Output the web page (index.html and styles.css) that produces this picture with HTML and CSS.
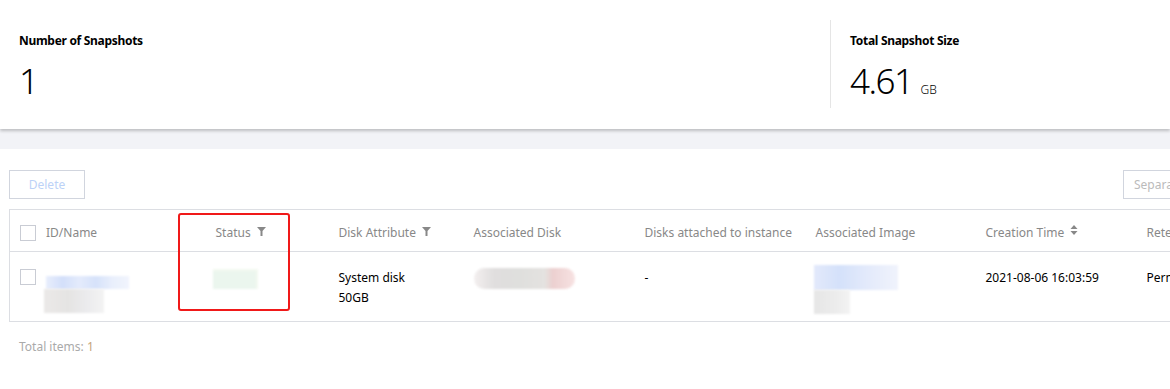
FILE: index.html
```html
<!DOCTYPE html>
<html>
<head>
    <title>Snapshots</title>
    <link rel="stylesheet" href="styles.css">
</head>
<body>
    <div class="summary">
        <div class="stat stat-count">
            <div class="stat-label">Number of Snapshots</div>
            <div class="stat-value">1</div>
        </div>
        <div class="stat stat-size">
            <div class="stat-label">Total Snapshot Size</div>
            <div class="stat-value">4.61<span class="unit">GB</span></div>
        </div>
    </div>
    <div class="band"></div>

    <div class="main">
        <div class="toolbar">
            <button class="btn-delete">Delete</button>
            <div class="search">Separate keywords with "|"</div>
        </div>

        <div class="table-box">
            <table class="grid">
                <colgroup>
                    <col class="c-id">
                    <col class="c-status">
                    <col class="c-attr">
                    <col class="c-disk">
                    <col class="c-attached">
                    <col class="c-image">
                    <col class="c-time">
                    <col class="c-ret">
                </colgroup>
                <thead>
                    <tr>
                        <th><span class="check"></span>ID/Name</th>
                        <th>Status <svg class="ico" width="9" height="9" viewBox="0 0 9 9"><path d="M0 0H9L5.5 4V9H3.5V4Z" fill="#888"/></svg></th>
                        <th>Disk Attribute <svg class="ico" width="9" height="9" viewBox="0 0 9 9"><path d="M0 0H9L5.5 4V9H3.5V4Z" fill="#888"/></svg></th>
                        <th>Associated Disk</th>
                        <th>Disks attached to instance</th>
                        <th>Associated Image</th>
                        <th>Creation Time <svg class="ico sort" width="8" height="10" viewBox="0 0 8 10"><path d="M4 0L7.5 4H0.5Z M4 10L7.5 6H0.5Z" fill="#888"/></svg></th>
                        <th>Retention Period</th>
                    </tr>
                </thead>
                <tbody>
                    <tr>
                        <td>
                            <div class="id-cell">
                                <span class="check"></span>
                                <div class="blur-stack">
                                    <div class="blur blur-blue wide"></div>
                                    <div class="blur blur-gray short"></div>
                                </div>
                            </div>
                        </td>
                        <td><div class="blur blur-green"></div></td>
                        <td><div>System disk</div><div>50GB</div></td>
                        <td><div class="blur blur-disk"></div></td>
                        <td>-</td>
                        <td>
                            <div class="blur-stack">
                                <div class="blur blur-blue image"></div>
                                <div class="blur blur-gray tiny"></div>
                            </div>
                        </td>
                        <td>2021-08-06 16:03:59</td>
                        <td>Permanent</td>
                    </tr>
                </tbody>
            </table>
            <div class="mark"></div>
        </div>

        <div class="total">Total items: <span class="total-num">1</span></div>
    </div>
</body>
</html>
```

FILE: styles.css
```css
body {
    margin: 0;
    font-family: "Noto Sans", "Liberation Sans", sans-serif;
    font-size: 12px;
    color: #000;
    background-color: #fff;
    overflow: hidden;
}

.summary {
    height: 129px;
    display: flex;
    background-color: #fff;
    box-shadow: 0 2px 3px rgba(0, 0, 0, 0.22);
    position: relative;
    z-index: 1;
}

.stat {
    padding: 33px 19px 0;
}

.stat-count {
    width: 792px;
    margin: 20px 0 21px;
    padding-top: 13px;
    border-right: 1px solid #e5e5e5;
}

.stat-label {
    font-weight: bold;
    line-height: 16px;
    letter-spacing: -0.3px;
    color: #000;
}

.stat-value {
    margin-top: 10px;
    font-size: 35px;
    font-weight: 300;
    line-height: 44px;
    letter-spacing: -1.5px;
}

.stat-value .unit {
    font-size: 12px;
    letter-spacing: 0;
    margin-left: 8px;
}

.band {
    height: 20px;
    background-color: #f2f3f7;
}

.main {
    padding: 21px 0 0 9px;
}

.toolbar {
    display: flex;
    justify-content: space-between;
    width: 1300px;
}

.btn-delete {
    width: 76px;
    height: 29px;
    border: 1px solid #d1d5de;
    background-color: #fff;
    color: #bcd2f7;
    font-family: inherit;
    font-size: 12px;
    padding: 0;
}

.search {
    width: 174px;
    height: 27px;
    border: 1px solid #d1d5de;
    line-height: 27px;
    padding-left: 10px;
    color: #bbb;
    white-space: nowrap;
    overflow: hidden;
}

.table-box {
    position: relative;
    margin-top: 10px;
    width: 1300px;
}

.grid {
    border-collapse: collapse;
    table-layout: fixed;
    width: 1300px;
    border: 1px solid #dcdee3;
}

.c-id { width: 198px; }
.c-status { width: 121px; }
.c-attr { width: 135px; }
.c-disk { width: 171px; }
.c-attached { width: 171px; }
.c-image { width: 170px; }
.c-time { width: 161px; }

.grid th {
    height: 42px;
    padding: 4px 10px 0;
    box-sizing: border-box;
    text-align: left;
    font-weight: normal;
    color: #888;
    white-space: nowrap;
    border-bottom: 1px solid #dcdee3;
}

.grid th:nth-child(2) {
    padding-left: 8px;
}

.grid td {
    height: 70px;
    padding: 16px 10px 0;
    vertical-align: top;
    line-height: 20px;
    box-sizing: border-box;
    white-space: nowrap;
}

.grid td:nth-child(2) {
    padding-left: 5px;
}

.check {
    display: inline-block;
    width: 14px;
    height: 14px;
    border: 1px solid #c9ccd4;
    vertical-align: -4px;
    margin-right: 10px;
    background-color: #fff;
}

.ico {
    margin-left: 3px;
    vertical-align: 1px;
}

.ico.sort {
    vertical-align: 2px;
}

.id-cell {
    display: flex;
    align-items: flex-start;
}

.id-cell .check {
    margin-top: 1px;
}

.blur-stack {
    display: flex;
    flex-direction: column;
}

.blur {
    filter: blur(1px);
}

.blur-blue.wide {
    width: 83px;
    height: 13px;
    margin-top: 8px;
    background: linear-gradient(90deg, #e8eefc 0%, #d3dffa 20%, #e4ebfc 40%, #d6e2fa 60%, #e9effc 80%, #f1f4fd 100%);
}

.blur-gray.short {
    width: 60px;
    height: 24px;
    margin-left: -2px;
    background: linear-gradient(90deg, #ebe9e8 0%, #e5e4e3 40%, #ebebed 70%, #f3f3f3 100%);
}

.blur-green {
    width: 45px;
    height: 20px;
    margin-top: 1px;
    background-color: #ebf6ee;
    box-shadow: inset -3px 3px 0 -1px #f3f9f0;
}

.blur-disk {
    width: 101px;
    height: 21px;
    border-radius: 10px;
    background: linear-gradient(90deg, #f3efef 0%, #e0dede 20%, #dfdfdd 45%, #e4e2e0 70%, #ecd0d0 78%, #f7e2e2 100%);
}

.blur-blue.image {
    width: 84px;
    height: 25px;
    margin-top: -3px;
    margin-left: -2px;
    background: linear-gradient(90deg, #e3e9fb 0%, #d4e1fa 30%, #e2e9fb 60%, #f0f3fc 100%);
}

.blur-gray.tiny {
    width: 36px;
    height: 24px;
    margin-left: -2px;
    background: linear-gradient(90deg, #e6e6e6 0%, #ececec 60%, #f3f3f3 100%);
}

.mark {
    position: absolute;
    left: 169px;
    top: 4px;
    width: 108px;
    height: 94px;
    border: 2px solid #f01919;
    border-radius: 3px;
}

.total {
    margin-top: 17px;
    padding-left: 10px;
    color: #aaa;
    line-height: 16px;
}

.total-num {
    color: #c5a57d;
}
```
